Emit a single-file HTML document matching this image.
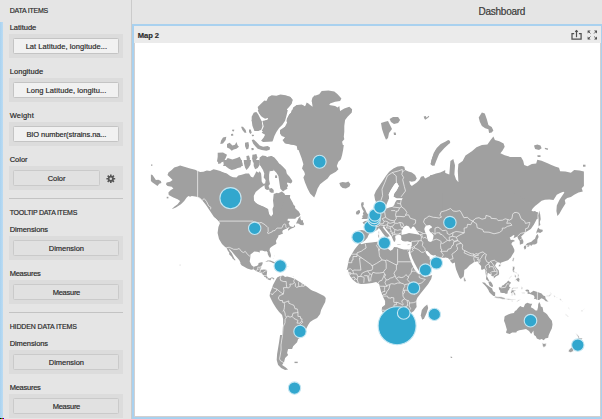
<!DOCTYPE html>
<html><head><meta charset="utf-8"><title>Dashboard</title>
<style>
html,body{margin:0;padding:0}
body{width:602px;height:419px;overflow:hidden;background:#e5e5e5;position:relative;font-family:"Liberation Sans",sans-serif;color:#2b2b2b}
.abs{position:absolute}
.lbl{position:absolute;white-space:nowrap;line-height:12px;height:12px;font-size:7.5px;color:#222;-webkit-text-stroke:0.18px #333}
.h{color:#262626;font-size:7px}
.box{position:absolute;left:9px;width:114px;height:24.2px;background:#dcdcdc}
.btn{position:absolute;left:4.4px;top:4px;height:16.2px;box-sizing:border-box;border:1px solid #c4c4c4;border-radius:1.5px;font-size:7.5px;line-height:16px;text-align:center;white-space:nowrap;color:#1e1e1e;-webkit-text-stroke:0.18px #333}
.f{background:#f1f1f1}
.e{background:#e1e1e1;border-color:#cacaca}
.sep{position:absolute;left:9px;width:114px;height:1px;background:#c3c3c3}
</style></head><body>
<div class="abs" style="left:0;top:22px;width:2.5px;height:397px;background:linear-gradient(90deg,#a9d2f0,#bcdcf3)"></div>
<div class="abs" style="left:0;top:418px;width:1.4px;height:1px;background:#000"></div><div class="abs" style="left:1.4px;top:418px;width:.6px;height:1px;background:#0b0"></div><div class="abs" style="left:2px;top:418px;width:.5px;height:1px;background:#e00"></div><div class="abs" style="left:2.5px;top:418px;width:.5px;height:1px;background:#00e"></div>
<div class="abs" style="left:131px;top:0;width:1px;height:419px;background:#cbcbcb"></div>

<div class="lbl h" style="left:9.7px;top:5.4px;letter-spacing:-0.228px">DATA ITEMS</div>
<div class="lbl l" style="left:9.7px;top:22.2px;letter-spacing:-0.013px">Latitude</div>
<div class="lbl l" style="left:9.7px;top:66.0px;letter-spacing:0.061px">Longitude</div>
<div class="lbl l" style="left:9.7px;top:109.9px;letter-spacing:0.180px">Weight</div>
<div class="lbl l" style="left:9.7px;top:154.2px;letter-spacing:-0.008px">Color</div>
<div class="lbl h" style="left:9.7px;top:206.5px;letter-spacing:-0.239px">TOOLTIP DATA ITEMS</div>
<div class="lbl l" style="left:9.7px;top:223.8px;letter-spacing:-0.089px">Dimensions</div>
<div class="lbl l" style="left:9.7px;top:267.9px;letter-spacing:-0.255px">Measures</div>
<div class="lbl h" style="left:9.7px;top:320.9px;letter-spacing:-0.139px">HIDDEN DATA ITEMS</div>
<div class="lbl l" style="left:9.7px;top:337.5px;letter-spacing:-0.089px">Dimensions</div>
<div class="lbl l" style="left:9.7px;top:381.8px;letter-spacing:-0.255px">Measures</div>
<div class="box" style="top:34.2px"><div class="btn f" style="width:106.0px;letter-spacing:0.055px">Lat Latitude, longitude...</div></div>
<div class="box" style="top:78.3px"><div class="btn f" style="width:106.0px;letter-spacing:0.081px">Long Latitude, longitu...</div></div>
<div class="box" style="top:122.3px"><div class="btn f" style="width:106.0px;letter-spacing:-0.071px">BIO number(strains.na...</div></div>
<div class="box" style="top:166.2px"><div class="btn e" style="width:86.4px;letter-spacing:-0.008px">Color</div></div>
<div class="box" style="top:236.0px"><div class="btn e" style="width:106.0px;letter-spacing:-0.026px">Dimension</div></div>
<div class="box" style="top:279.8px"><div class="btn e" style="width:106.0px;letter-spacing:-0.270px">Measure</div></div>
<div class="box" style="top:350.0px"><div class="btn e" style="width:106.0px;letter-spacing:-0.026px">Dimension</div></div>
<div class="box" style="top:393.8px"><div class="btn e" style="width:106.0px;letter-spacing:-0.270px">Measure</div></div>
<div class="sep" style="top:197.8px"></div><div class="sep" style="top:311.8px"></div>
<svg class="abs" style="left:106.1px;top:173.9px" width="9.6" height="9.6" viewBox="0 0 12 12"><g fill="#555"><circle cx="6" cy="6" r="3.7"/><g stroke="#555" stroke-width="2"><path d="M6 0.5V11.5M0.5 6H11.5M2.1 2.1L9.9 9.9M9.9 2.1L2.1 9.9"/></g></g><circle cx="6" cy="6" r="1.6" fill="#dcdcdc"/></svg>
<div class="lbl" style="left:478.6px;top:4.5px;font-size:10px;line-height:14px;height:14px;color:#3a3a3a;letter-spacing:-0.269px">Dashboard</div>
<div class="abs" style="left:132px;top:24px;width:470px;height:395px;background:#a9d1ef"></div>
<div class="abs" style="left:134px;top:26px;width:467px;height:17px;background:#ebebeb"></div>
<div class="lbl" style="left:137.8px;top:29.7px;font-size:7.6px;font-weight:bold;color:#2a2a2a;letter-spacing:-0.066px">Map 2</div>
<div class="abs" style="left:134px;top:43px;width:467px;height:374px;box-sizing:border-box;border:1px solid #d3d0d0;border-top:0;background:#fff;overflow:hidden" id="map">
<svg width="466" height="373" viewBox="0 0 466 373" style="display:block;margin-left:-1px"><g fill="#a0a0a0"><path d="M63.6 127.9L61.1 126.7L56.1 125.4L51.1 124.0L46.1 122.4L43.6 123.4L40.2 124.5L37.7 127.1L34.4 129.6L33.5 132.1L36.1 134.6L38.6 137.1L36.1 138.7L32.7 139.6L31.9 141.2L33.5 142.9L37.7 143.7L39.4 145.4L36.9 147.1L34.4 149.6L34.7 152.1L39.4 154.6L43.6 156.3L46.1 157.9L43.6 161.3L40.2 163.8L37.7 166.3L41.9 164.6L46.9 161.3L50.2 157.9L52.7 154.6L54.4 152.9L56.1 153.8L57.8 152.9L61.1 153.4L63.6 154.1L66.1 155.4L69.4 157.9L71.9 161.3L74.4 164.6L76.1 166.9L106.2 166.9L106.2 135.4L99.5 134.6L96.2 132.9L92.8 130.4L89.5 129.6L86.1 127.9L82.8 127.1L79.5 126.2L76.1 127.9L72.8 127.6L69.4 128.7L66.1 129.1Z"/><path d="M16.9 131.6L18.5 132.1L20.2 134.6L21.9 137.1L24.4 136.7L26.9 137.9L27.4 140.1L25.2 140.7L23.5 142.9L21.0 141.2L18.5 139.6L16.9 137.9Z"/><path d="M17.0 121.4L18.4 121.4L18.4 122.7L17.0 122.7Z"/><path d="M32.7 153.8L34.4 153.8L34.4 155.4L32.7 155.4Z"/><path d="M119.7 69.7L122.4 69.0L124.4 71.7L126.4 75.7L127.7 79.7L128.4 83.7L127.1 87.0L124.4 87.7L121.7 85.0L119.7 81.7L117.7 77.7L117.7 73.7Z"/><path d="M123.7 67.0L125.1 70.3L127.7 73.7L131.1 75.7L133.7 75.0L134.4 76.3L131.1 77.7L129.7 80.4L130.4 83.7L129.7 87.0L127.7 89.7L131.1 91.7L129.7 94.4L127.1 97.7L129.1 99.0L134.4 98.8L138.4 98.4L139.1 97.0L140.4 93.0L142.4 89.0L145.1 85.0L148.4 81.7L151.1 77.7L152.4 73.0L153.8 67.0Z"/><path d="M157.8 67.0L155.8 73.7L155.1 77.7L153.1 81.7L150.4 84.4L147.8 87.0L146.2 89.7L148.4 91.7L151.8 93.0L150.4 95.0L149.1 97.7L152.4 100.4L157.1 101.7L161.1 102.0L161.1 67.0Z"/><path d="M117.7 97.0L119.7 96.4L122.4 99.0L125.7 102.4L129.1 103.7L133.7 103.0L136.0 104.4L135.7 106.8L132.4 107.7L127.7 107.1L123.7 105.7L121.1 103.0L119.1 100.4Z"/><path d="M107.0 83.7L109.0 83.7L111.7 87.0L112.4 89.7L110.6 89.7L108.4 87.0Z"/><path d="M115.0 86.4L116.8 86.4L117.7 89.7L116.4 91.0L115.0 89.0Z"/><path d="M98.4 86.4L100.4 86.8L99.7 88.4L98.1 88.1Z"/><path d="M97.0 91.0L99.0 90.8L99.4 92.6L97.3 93.0Z"/><path d="M117.7 91.7L119.7 91.7L120.0 93.0L118.1 93.3Z"/><path d="M89.0 94.4L92.3 93.7L91.7 97.0L89.0 100.4L86.3 101.0L87.0 97.7Z"/><path d="M93.0 101.0L95.7 99.7L98.4 102.4L101.0 101.7L102.4 99.0L103.7 102.4L105.0 103.7L102.4 105.7L99.7 106.4L97.7 107.7L95.7 105.7L93.0 104.4Z"/><path d="M111.0 99.7L114.4 99.0L115.0 102.4L114.4 105.7L112.4 106.4L111.0 103.0Z"/><path d="M117.3 105.1L119.5 105.1L119.7 107.1L117.7 107.3Z"/><path d="M83.7 109.7L89.0 109.5L93.0 111.7L91.7 115.1L89.7 118.4L86.3 119.7L83.0 118.4L83.7 113.7Z"/><path d="M91.0 118.4L93.7 115.1L98.4 116.4L103.0 115.1L105.7 113.7L107.7 117.7L109.0 122.9L89.0 122.9Z"/><path d="M112.4 113.1L115.0 112.4L116.0 115.7L115.0 119.7L113.0 119.1Z"/><path d="M118.4 111.7L122.4 111.1L123.5 114.4L121.1 118.4L119.1 119.7L118.1 115.7Z"/><path d="M125.7 114.4L128.4 112.4L131.7 113.1L134.4 115.1L137.1 113.1L140.4 114.4L143.8 118.4L146.4 122.9L126.4 122.9L125.1 119.1Z"/><path d="M81.0 128.3L86.3 128.7L91.7 130.4L94.4 132.8L97.0 134.4L102.4 134.4L104.4 132.4L107.7 131.7L111.7 130.4L115.0 130.4L117.0 133.7L119.1 134.4L121.1 131.0L122.4 128.3L124.4 129.7L125.7 128.3L127.1 130.4L127.5 134.4L127.7 138.4L129.1 140.8L131.1 140.4L131.7 137.0L131.5 133.0L131.7 129.0L132.4 125.7L134.4 125.3L135.7 128.3L135.1 131.7L135.1 137.0L136.0 141.0L134.4 143.0L132.4 143.0L131.1 141.7L126.4 145.0L121.7 149.0L119.7 153.0L119.7 157.1L121.1 159.7L125.1 161.7L129.7 163.7L133.1 165.7L134.4 169.7L135.1 172.9L81.0 172.9Z"/><path d="M135.1 145.7L137.7 145.0L139.7 147.0L139.7 149.7L137.1 149.7L135.5 148.4Z"/><path d="M89.0 117.0L107.7 117.0L108.4 121.0L107.0 124.3L103.7 125.0L101.0 126.3L97.7 127.0L95.0 125.7L92.3 123.7L89.7 121.0Z"/><path d="M83.7 117.0L87.7 117.0L87.0 120.3L84.3 121.0Z"/><path d="M109.7 117.0L117.0 117.0L116.4 121.7L114.4 125.0L112.4 127.0L111.0 124.3L110.1 121.0Z"/><path d="M119.7 117.0L125.1 117.0L125.7 121.7L123.7 125.0L121.1 126.3L119.7 123.0Z"/><path d="M127.1 117.0L137.1 117.0L139.7 127.7L135.7 128.3L133.7 126.3L131.7 123.7L129.1 121.7L127.5 119.7Z"/><path d="M141.1 132.4L143.1 132.4L143.1 135.0L141.1 135.0Z"/><path d="M143.8 150.4L147.8 148.4L150.4 150.4L152.4 154.4L153.8 157.1L155.8 159.7L161.1 163.1L161.1 172.9L139.1 172.9L139.7 167.7L141.1 163.7L141.7 159.7L141.7 155.1Z"/><path d="M146.0 52.0L151.0 52.9L156.0 53.7L158.5 57.0L156.9 61.2L153.5 64.5L151.8 69.6L149.3 74.6L146.0 78.7Z"/><path d="M146.0 87.1L151.0 83.7L153.5 78.7L152.7 76.2L155.2 71.2L158.5 68.7L159.4 64.5L162.7 62.0L168.5 62.0L171.0 63.7L172.7 59.5L175.2 61.2L178.6 63.7L177.7 57.0L180.2 52.9L185.2 51.2L187.7 47.9L194.4 47.4L200.3 48.4L203.6 51.2L207.4 55.4L206.1 57.9L201.1 58.7L196.1 60.4L195.2 62.0L201.1 62.9L203.6 64.5L205.3 62.9L206.1 67.9L210.3 65.4L215.3 63.7L218.1 66.2L217.8 69.6L213.6 73.7L211.1 77.1L210.3 82.9L210.3 88.8L209.8 93.8L210.3 96.3L208.1 98.8L209.1 102.9L208.6 106.9L163.5 106.9L162.7 102.9L157.7 101.3L151.0 100.4L148.5 97.1L151.8 94.6L147.7 92.9L146.0 90.4Z"/><path d="M162.7 102.0L165.2 108.7L167.7 115.4L169.4 121.2L168.0 125.4L170.2 128.7L171.0 131.2L169.4 134.6L171.0 139.6L173.5 145.4L176.1 150.4L180.2 154.6L181.9 150.4L183.6 145.4L186.1 141.2L190.2 137.9L193.6 135.4L196.1 132.1L201.9 128.7L204.4 126.2L202.8 122.9L204.4 118.7L206.9 116.2L208.1 112.0L209.1 107.0L209.8 102.0Z"/><path d="M205.3 140.1L208.6 139.1L211.9 139.6L214.4 138.4L216.5 141.2L215.3 143.7L211.9 145.4L208.6 145.1L206.4 142.9Z"/><path d="M146.0 121.2L148.5 123.7L150.2 127.0L152.7 131.2L156.0 135.4L158.5 137.9L156.9 140.4L153.5 139.6L151.8 142.1L153.5 145.7L151.0 147.1L147.7 144.6L146.0 143.7Z"/><path d="M146.0 152.1L148.5 153.8L151.0 156.3L154.3 155.4L156.0 159.6L159.4 163.8L162.7 167.9L166.0 171.9L146.0 171.9Z"/><path d="M123.7 64.0L127.0 60.7L130.4 57.4L132.4 58.0L134.4 54.0L137.7 52.3L142.4 52.7L146.4 51.4L151.7 52.3L156.4 54.0L158.7 56.7L157.7 60.7L155.1 64.0L153.1 66.0L152.4 69.4L149.7 73.4L147.1 77.4L144.4 82.1L141.1 84.7L139.7 87.9L127.7 87.9L129.7 83.4L128.4 78.1L133.7 76.7L134.4 74.7L130.4 74.1L127.0 72.7L125.0 69.4Z"/><path d="M121.0 69.4L122.4 72.1L125.0 74.7L127.7 78.1L128.4 82.7L126.4 86.1L124.4 87.9L120.4 87.9L118.4 82.7L117.7 77.4L119.0 72.7Z"/><path d="M181.1 52.0L178.4 54.7L177.8 58.7L179.8 62.7L181.1 64.0Z"/><path d="M181.1 64.7L177.1 64.0L173.8 60.0L171.1 63.4L167.8 61.4L163.1 62.0L159.1 64.7L157.7 68.7L155.7 71.4L153.7 74.7L152.4 78.1L153.7 80.7L152.4 84.7L150.4 87.9L181.1 87.9Z"/><path d="M125.7 119.7L126.3 115.0L129.0 113.0L131.7 115.3L134.4 113.4L137.7 113.0L140.4 115.3L143.0 119.0L146.4 121.4L149.7 124.4L152.0 127.0L152.8 130.8L155.4 133.4L158.1 137.4L157.3 140.1L154.4 138.4L152.4 139.3L154.1 142.8L152.8 145.1L150.1 143.0L151.0 147.1L149.0 148.4L146.4 145.7L145.7 141.7L145.0 137.0L144.4 133.0L142.4 129.7L139.7 127.0L137.7 125.7L134.4 127.0L135.0 130.4L134.4 135.0L131.7 137.0L129.7 134.4L130.3 130.4L129.0 127.0L127.0 123.7Z"/><path d="M130.3 142.0L132.3 141.0L135.0 143.7L135.7 146.4L133.0 147.1L131.0 145.7Z"/><path d="M139.7 151.1L143.0 149.7L146.4 151.7L149.7 153.7L152.4 155.7L155.0 159.1L157.0 162.9L139.7 162.9L139.0 157.7Z"/><path d="M66.0 152.0L68.0 157.0L72.0 162.0L76.0 168.0L80.0 174.0L84.0 177.7L86.0 180.1L84.4 184.1L83.6 190.1L85.0 196.1L88.0 201.1L91.1 204.1L94.1 205.7L95.2 205.7L97.9 208.4L99.7 210.8L101.6 212.9L103.4 214.9L105.3 217.2L106.4 219.5L106.4 220.8L107.8 222.4L110.6 223.9L113.2 225.5L117.2 226.8L119.6 226.2L119.6 223.7L117.5 222.3L115.7 218.4L116.4 213.7L116.4 211.5L118.4 209.9L120.2 208.6L123.2 208.8L125.9 209.5L125.7 207.8L128.1 207.5L131.1 208.5L132.3 208.1L133.7 209.5L133.7 211.1L134.9 213.5L135.8 214.6L136.7 214.5L137.0 212.2L136.4 210.1L135.5 207.4L135.9 205.3L137.2 204.1L139.5 202.5L141.3 201.4L142.5 200.6L141.9 197.9L142.9 196.0L144.3 193.8L144.3 192.4L146.7 191.4L149.1 190.6L148.2 189.0L148.9 187.3L151.0 186.3L152.8 185.5L156.2 152.0L141.2 152.0L141.8 158.0L140.1 162.0L138.5 166.0L139.1 171.0L137.1 173.6L135.1 171.0L134.1 166.0L130.1 164.0L124.1 162.0L120.1 158.0L119.1 152.0Z"/><path d="M92.4 204.6L93.7 207.4L95.5 209.9L94.9 211.1L97.9 213.9L98.5 215.5L100.9 217.6L101.6 216.9L100.3 215.5L99.1 212.9L97.6 210.1L95.5 207.4L95.2 205.7Z"/><path d="M141.1 238.0L143.1 234.4L146.1 233.0L149.1 232.4L151.1 234.0L153.1 233.6L157.1 234.4L161.1 236.0L164.1 238.0L167.1 239.8L170.1 241.8L173.1 243.8L176.1 246.2L178.1 247.5L182.1 249.1L186.1 251.1L190.1 253.1L191.8 255.1L191.2 259.1L189.1 263.1L187.1 267.1L186.1 271.1L183.1 275.1L179.1 277.1L176.1 279.1L174.1 282.1L172.1 286.1L170.1 290.1L167.1 294.1L164.1 296.1L163.1 299.2L161.1 301.2L159.1 303.2L158.1 306.0L146.1 306.0L147.1 300.2L147.7 294.1L148.5 288.1L149.1 282.1L149.1 276.1L148.1 272.1L145.1 269.1L142.1 265.1L139.0 260.1L137.0 256.1L135.6 253.1L136.0 250.1L137.6 246.0L139.0 242.0Z"/><path d="M146.1 292.0L161.1 292.0L159.1 295.0L157.1 298.0L158.1 300.0L155.1 302.0L154.1 306.0L153.1 310.0L154.1 312.0L151.1 315.0L150.1 319.1L148.1 322.1L151.1 324.1L154.1 326.5L151.1 327.1L147.1 325.1L144.1 322.1L142.7 317.1L143.1 311.0L144.1 305.0L145.1 299.0Z"/><path d="M160.5 318.7L163.7 318.7L163.7 320.1L160.5 320.1Z"/><path d="M241.1 157.1L240.2 152.1L241.9 147.9L245.2 142.9L248.6 137.9L251.9 132.9L255.2 128.7L259.4 125.4L263.6 123.4L267.8 122.9L270.3 123.7L271.1 127.0L274.4 128.4L277.8 129.5L281.1 132.0L282.8 135.4L281.1 137.9L277.8 138.7L275.3 137.9L276.1 141.2L277.8 142.9L280.3 141.2L282.8 139.6L285.3 137.1L287.0 133.7L289.5 132.9L291.1 135.4L294.5 133.7L297.8 132.0L302.0 130.4L306.2 129.5L309.5 127.9L311.2 127.0L311.2 176.9L246.9 176.9L246.9 171.3L250.2 169.6L249.7 165.4L252.7 165.4L255.2 164.6L258.6 163.8L260.2 162.1L261.1 159.6L262.8 157.1L267.8 156.7L268.6 155.4L262.8 155.4L259.4 153.7L260.2 150.4L262.8 147.1L264.8 142.9L262.8 139.6L261.1 140.4L259.4 142.9L256.9 147.1L254.7 151.2L255.2 155.4L253.6 158.8L251.9 162.9L248.6 162.1L245.2 161.3L242.7 160.4Z"/><path d="M302.0 107.0L306.2 107.0L304.5 111.2L302.0 115.3L299.5 119.5L298.6 122.9L296.5 121.2L297.5 117.0L299.5 112.0Z"/><path d="M227.5 159.5L229.5 159.0L229.8 161.5L229.0 163.0L230.5 165.0L231.5 167.0L232.5 169.5L234.0 171.5L235.5 173.3L235.0 174.9L232.5 175.9L229.5 176.1L227.5 176.1L228.8 174.3L228.0 172.9L229.5 172.1L228.8 170.5L229.8 168.5L228.5 166.5L227.5 164.0L227.0 161.5Z"/><path d="M222.5 168.5L224.5 167.0L226.0 167.5L226.0 169.5L224.5 171.5L222.5 171.5L221.8 170.0Z"/><path d="M246.9 157.0L311.2 157.0L311.0 214.5L307.6 214.6L302.8 213.9L301.6 212.1L301.3 213.3L301.7 215.5L304.0 216.6L305.6 218.2L303.1 222.7L299.8 224.6L296.2 225.8L291.9 229.0L287.7 230.4L285.7 230.6L285.4 231.9L266.1 226.9L212.7 226.9L213.5 223.8L214.3 219.6L215.2 215.4L217.7 211.3L220.2 207.1L222.7 203.7L225.2 200.7L225.2 198.7L222.7 197.9L221.0 194.6L221.0 190.4L223.5 187.9L227.7 187.1L231.9 187.9L231.9 185.4L230.7 182.0L228.5 179.5L231.0 177.9L234.4 177.4L236.0 175.4L238.5 173.7L241.9 171.2L245.2 168.7L246.9 165.3L246.9 161.2Z"/><path d="M225.0 202.0L227.0 201.0L236.1 200.0L245.1 199.0L254.1 203.0L259.1 205.0L264.1 203.0L270.1 204.0L275.1 205.0L277.1 207.0L279.1 213.0L281.8 219.0L284.2 225.1L287.2 230.1L290.2 234.1L295.2 233.1L298.2 232.1L297.2 236.1L294.2 241.1L290.2 246.1L286.2 251.1L283.2 255.1L281.8 259.1L282.4 264.1L279.9 267.9L276.1 270.7L275.1 275.2L275.1 281.0L254.1 281.0L253.1 277.2L251.1 272.2L250.1 267.1L251.1 263.1L251.1 258.1L249.1 254.1L247.1 249.1L246.1 245.1L245.1 241.1L242.1 239.1L238.1 240.1L232.1 240.7L227.0 241.1L223.0 240.1L219.0 237.1L216.0 233.1L214.4 229.1L214.0 225.1L215.0 219.0L218.0 213.0L221.0 208.0Z"/><path d="M293.2 261.5L294.2 265.1L292.6 270.1L290.2 275.2L288.2 276.8L286.8 272.2L287.8 267.1L290.2 264.1Z"/><path d="M248.0 264.3L247.7 267.4L251.0 273.8L251.8 279.1L253.4 282.0L255.4 286.7L255.7 289.9L257.6 290.8L261.2 289.6L264.5 289.6L267.8 287.7L270.9 283.6L273.0 279.1L276.3 275.8L275.4 270.6L278.1 267.4L282.4 264.3L282.3 258.7L280.5 253.2L263.6 252.0Z"/><path d="M316.6 313.6L318.2 313.9L318.1 315.0L316.6 314.8Z"/><path d="M296.0 132.2L304.5 131.4L310.2 129.4L315.3 131.4L316.4 118.0L319.3 116.0L321.0 122.3L320.4 131.4L322.1 136.5L324.4 139.3L323.8 128.0L324.4 120.9L328.6 118.0L331.5 112.4L338.2 108.0L342.5 104.3L347.9 102.1L353.4 101.5L356.6 97.1L359.4 93.4L360.9 97.1L365.3 98.2L369.6 100.4L370.7 103.7L368.6 107.4L366.4 110.2L370.7 112.3L376.1 113.9L382.7 113.9L387.0 113.9L389.2 117.8L390.2 122.1L393.5 123.2L397.8 121.0L402.2 120.4L403.3 116.7L407.6 117.8L413.0 119.9L417.4 122.1L421.7 123.8L425.0 124.7L426.1 128.2L431.5 128.6L436.9 129.7L440.2 126.9L445.6 127.5L449.9 128.6L449.9 126.8L449.9 143.0L447.7 145.2L448.8 148.5L444.5 149.6L440.2 151.7L436.9 153.9L433.2 155.0L430.8 157.1L431.5 160.4L428.2 165.8L425.4 170.8L423.4 173.0L422.4 168.0L422.8 162.6L425.4 157.1L428.2 152.8L430.4 149.6L429.3 148.7L426.1 150.0L422.8 151.7L419.5 157.1L415.2 156.5L410.9 156.7L407.6 157.8L404.3 160.4L401.1 163.0L398.9 165.2L397.4 167.4L399.3 169.1L403.7 169.1L403.6 175.9L296.0 175.9Z"/><path d="M297.4 121.7L298.8 113.8L301.7 108.1L307.4 102.4L314.5 97.6L316.4 99.6L310.2 105.3L305.1 110.9L302.2 118.0L300.3 122.9Z"/><path d="M449.0 121.7L451.5 121.7L451.5 123.7L449.0 123.7Z"/><path d="M307.6 214.6L311.2 214.5L313.9 214.9L316.0 216.9L316.6 218.4L318.5 220.4L320.9 219.5L321.2 222.7L322.1 226.5L323.6 230.2L325.4 234.5L326.9 236.2L327.7 235.1L329.7 233.5L330.1 230.2L330.3 227.1L332.7 225.6L335.9 222.0L338.2 220.5L339.8 219.2L342.6 218.4L344.1 218.4L344.7 220.5L347.1 222.9L347.1 226.5L348.6 226.7L350.6 225.5L351.2 227.7L351.8 231.4L352.2 233.9L352.0 236.3L354.4 238.2L354.5 239.4L355.6 242.4L358.2 244.3L359.1 243.0L358.1 240.6L356.7 238.5L355.2 237.7L354.2 235.7L353.0 233.3L354.0 229.7L355.1 230.6L356.8 231.2L357.6 232.9L359.8 233.4L359.8 235.5L362.1 233.3L364.7 232.0L365.2 230.2L364.7 227.3L363.0 225.6L361.0 222.7L362.1 220.4L363.6 219.3L365.4 219.5L366.4 221.0L366.8 219.7L370.3 218.4L373.9 217.2L376.9 214.6L378.1 212.2L380.3 208.8L380.4 206.7L378.7 203.1L377.3 201.1L378.5 199.1L381.1 197.9L379.1 196.7L376.8 197.0L375.7 194.6L377.5 193.6L379.5 191.9L380.5 192.5L379.5 195.2L383.3 193.5L384.1 195.7L385.7 197.9L385.9 201.7L387.1 201.2L389.2 200.6L389.4 197.9L388.1 195.4L387.1 193.6L389.8 190.9L391.0 189.6L393.2 188.2L396.8 186.0L399.8 181.7L402.7 176.2L402.8 171.8L403.8 170.0L401.0 168.0L398.6 168.4L396.4 166.9L399.2 163.5L401.6 160.9L378.1 150.1L308.2 150.1L308.2 212.2Z"/><path d="M391.2 202.4L393.2 200.2L397.4 198.7L398.9 197.2L401.0 195.7L402.2 192.5L403.8 191.1L404.6 194.1L403.4 196.4L403.3 198.7L403.2 199.9L402.0 200.9L400.6 201.4L398.6 201.5L397.1 203.1L396.2 201.7L393.8 202.0L391.4 202.4Z"/><path d="M390.1 203.1L391.4 202.5L392.4 203.8L391.7 206.1L390.5 206.4L389.9 204.3Z"/><path d="M393.2 202.5L395.6 202.0L395.2 203.3L393.6 204.1Z"/><path d="M402.2 190.9L402.6 188.2L404.2 184.5L405.8 186.3L408.6 186.8L408.8 188.2L406.2 190.1L404.0 189.3L402.8 190.1Z"/><path d="M404.6 183.4L404.6 179.9L404.6 176.2L404.2 172.4L405.2 167.8L406.2 171.4L406.7 176.2L405.8 179.0L406.4 182.0L405.5 182.4Z"/><path d="M364.8 244.2L367.6 244.2L367.9 242.7L369.7 242.1L371.2 240.6L372.7 239.4L374.2 237.5L375.3 238.4L377.1 239.7L376.3 240.7L375.4 241.8L375.1 243.6L376.7 244.8L375.3 245.4L375.1 247.0L373.9 247.8L373.6 250.0L373.3 250.8L371.6 250.8L370.3 250.0L368.2 250.1L366.3 249.4L366.1 247.8L365.1 246.6L364.8 245.0Z"/><path d="M348.3 239.2L351.0 239.7L352.4 241.4L354.4 243.0L355.8 244.0L358.2 245.4L358.6 247.2L359.4 248.4L361.2 249.6L361.1 253.0L359.4 253.0L356.8 250.8L355.2 249.0L354.4 247.1L352.6 244.2L350.6 242.0L348.5 240.0Z"/><path d="M391.4 247.0L393.2 246.5L395.0 247.0L395.2 248.9L396.2 250.0L399.5 247.8L403.4 249.1L407.6 250.6L409.2 252.5L411.2 253.2L411.6 255.4L414.2 258.5L415.1 258.7L411.8 258.2L410.0 256.6L407.6 255.2L406.4 255.9L405.2 257.1L403.4 257.0L401.0 255.8L399.8 256.2L400.6 254.2L399.8 252.6L397.4 251.4L395.0 250.7L393.8 250.9L393.4 249.4L394.7 248.8L392.6 248.4L391.4 247.6Z"/><path d="M370.5 273.8L371.1 272.9L374.1 271.4L376.9 270.6L379.9 270.0L380.9 268.1L382.4 267.2L384.1 264.9L386.3 263.0L388.0 264.0L389.7 264.2L391.1 261.1L393.3 259.8L396.2 260.8L398.3 260.8L397.4 262.4L396.8 264.3L399.2 265.5L401.6 267.4L403.2 267.4L404.0 264.3L404.2 261.2L405.2 259.0L406.4 261.2L406.8 263.5L408.6 264.3L409.4 268.7L411.2 269.8L413.0 271.2L415.2 274.5L417.9 277.8L418.5 281.4L417.9 285.3L416.1 288.9L414.6 292.6L414.2 294.8L411.2 295.6L409.8 297.3L407.6 296.0L405.8 296.8L402.8 295.6L401.8 293.3L400.0 292.0L399.5 288.9L399.5 287.4L397.4 290.8L396.8 290.6L395.0 287.9L392.0 286.0L388.3 286.7L385.3 287.2L382.9 288.2L382.3 289.5L378.1 289.5L375.7 291.1L372.3 290.0L372.1 288.9L372.9 286.7L372.1 283.9L371.1 280.5L370.0 277.8L370.3 275.8Z"/><path d="M247.0 80.1L251.0 78.7L254.0 78.1L256.0 82.1L258.0 86.1L255.0 90.1L254.0 95.1L252.0 96.7L250.0 92.1L248.0 86.1Z"/><path d="M255.6 76.1L259.0 74.1L264.1 74.1L266.1 77.1L264.1 80.1L260.0 81.1L257.0 79.1Z"/><path d="M259.6 89.5L261.7 89.5L262.1 92.1L260.0 92.1Z"/><path d="M289.7 73.5L291.7 73.1L292.7 74.7L294.5 72.7L295.3 73.7L293.1 75.5L291.1 76.7L290.1 75.1Z"/><path d="M314.2 97.1L316.2 98.1L315.2 100.7L311.2 102.1L307.1 104.1L304.1 108.1L302.1 113.2L300.5 118.2L299.1 121.0L296.7 121.0L297.7 116.2L299.7 110.1L302.7 105.1L306.7 101.1L311.2 98.7Z"/><path d="M344.7 74.4L347.9 69.6L350.8 70.5L352.9 76.5L354.4 82.0L356.0 83.0L357.7 84.1L359.4 87.4L357.7 89.6L355.1 90.0L354.4 86.3L351.2 85.2L347.9 83.0L345.8 78.7Z"/><path d="M400.0 102.6L403.3 101.5L406.5 102.6L407.6 105.2L405.0 106.9L401.1 106.0Z"/><path d="M410.9 104.7L414.1 105.6L413.7 106.9L410.9 106.0Z"/><path d="M403.3 112.3L406.5 112.3L406.5 113.9L403.7 113.9Z"/><path d="M166.6 173.2L164.5 175.3L162.0 180.6L164.2 180.6L166.6 181.9L169.4 182.2L170.0 180.8L169.0 179.0L169.0 177.2L167.2 177.2L166.3 175.3Z"/><path d="M152.8 185.5L154.0 184.8L155.8 183.8L154.0 186.5L154.0 187.7L156.9 185.8L160.0 184.6L161.2 183.4L160.7 181.7L159.4 183.9L157.6 183.8L155.8 183.1L155.4 181.7L154.6 180.3L156.0 178.4L154.6 177.7L152.8 177.9L151.6 177.3L153.5 175.8L157.6 175.7L161.2 175.7L163.0 173.9L165.1 173.4L166.4 171.4L164.8 168.4L163.6 167.4L161.2 165.3L160.0 163.1L158.8 159.8L155.8 154.4L149.1 159.8L143.1 176.2L146.7 186.8Z"/><path d="M131.2 218.9L133.5 217.5L136.5 217.4L140.7 219.2L143.1 220.5L144.1 221.1L140.1 221.5L140.5 220.6L138.9 220.1L137.1 219.1L134.7 218.3L132.3 218.8Z"/><path d="M119.6 223.7L122.6 223.1L124.2 222.0L124.6 220.1L127.5 219.3L128.9 219.6L128.1 222.0L127.1 223.3L127.2 224.6L126.5 226.5L126.7 226.7L128.1 226.7L129.9 226.6L132.3 226.7L133.2 227.7L132.9 230.2L132.6 232.7L133.5 233.9L134.4 234.9L135.9 235.4L137.2 234.6L138.9 234.6L140.4 235.5L139.6 237.3L139.3 236.0L137.7 235.1L137.1 236.0L136.5 237.2L135.1 236.9L133.6 236.2L132.8 235.7L131.4 234.1L130.2 233.9L130.2 232.7L129.3 232.0L127.8 230.8L128.1 230.2L126.9 230.0L124.4 229.1L122.4 228.3L119.6 226.2Z"/></g><g fill="#a0a0a0" stroke="#fff" stroke-width="0.7"><path d="M379.3 214.6L380.4 214.9L379.8 217.5L379.1 218.8L378.2 217.5L378.5 215.9Z"/><path d="M364.5 222.3L365.4 221.3L367.3 221.5L366.7 223.1L365.4 223.7L364.5 223.2Z"/><path d="M329.7 234.3L330.3 234.3L331.3 235.7L332.1 237.5L331.5 238.5L330.1 238.8L329.7 236.9Z"/><path d="M378.7 223.3L380.8 223.4L380.8 225.8L380.0 227.7L381.1 229.0L382.9 229.6L382.9 230.7L381.1 229.6L379.3 229.3L378.8 228.3L378.1 227.1L378.5 225.8Z"/><path d="M380.5 237.5L382.3 235.6L384.6 234.3L385.9 236.3L385.6 238.2L384.6 239.1L382.9 238.2L382.3 236.9Z"/><path d="M383.4 230.8L384.7 231.1L385.0 232.7L384.4 233.9L383.6 233.5L383.9 232.0Z"/><path d="M380.5 231.8L382.0 232.0L382.1 233.9L381.5 234.7L380.9 234.1L380.5 233.3Z"/><path d="M374.8 235.7L377.5 232.3L377.3 233.5L375.2 236.0Z"/><path d="M360.3 254.2L361.2 253.1L364.2 253.8L367.0 253.7L369.3 254.3L371.5 255.3L371.4 256.4L368.5 256.2L364.8 255.4L361.8 254.9Z"/><path d="M372.1 255.8L374.5 255.8L376.9 255.9L379.3 256.0L381.7 255.9L381.7 256.6L378.1 256.8L374.5 256.9L372.1 256.6Z"/><path d="M382.3 258.5L384.1 256.9L386.5 256.2L385.9 257.1L383.5 258.4Z"/><path d="M376.9 257.4L379.1 257.5L378.7 258.4L377.1 258.0Z"/><path d="M377.5 252.6L377.5 250.2L376.7 249.4L377.3 247.4L377.9 245.4L379.1 244.4L381.7 244.8L384.1 244.0L383.5 245.5L381.7 245.4L379.3 245.4L378.3 247.1L379.9 247.1L382.1 247.1L381.5 247.9L379.9 248.3L380.9 250.0L381.7 251.3L381.1 252.4L379.9 251.7L379.3 249.4L378.5 249.6L378.6 252.6Z"/><path d="M387.1 243.6L388.0 244.2L388.6 245.6L387.7 247.0L387.3 245.4Z"/><path d="M387.7 249.6L391.1 249.6L390.8 250.5L388.0 250.2Z"/><path d="M412.4 252.8L414.9 252.6L416.7 251.1L417.0 252.0L415.5 253.2L413.0 253.5Z"/><path d="M407.9 299.8L410.0 300.6L412.2 300.1L412.1 302.4L411.2 303.8L409.4 304.5L408.6 302.7Z"/><path d="M441.6 290.2L443.5 291.8L445.0 293.3L445.3 295.0L448.0 295.0L448.5 295.6L446.8 297.6L446.7 298.7L444.7 301.2L444.0 300.7L444.6 298.7L442.9 297.6L444.0 295.6L444.0 294.1L442.0 291.1Z"/><path d="M441.6 299.5L443.5 301.4L441.7 304.3L439.9 305.7L439.2 308.6L436.5 309.6L434.1 308.6L434.7 306.9L436.5 305.2L439.0 303.2L440.2 301.4L441.0 299.9Z"/><path d="M45.5 221.7L46.7 221.5L46.7 222.4L45.8 222.7Z"/><path d="M139.1 223.4L141.6 223.8L140.8 224.2L139.3 223.8Z"/><path d="M152.5 223.3L154.3 223.4L154.2 223.9L152.5 223.9Z"/><path d="M138.9 215.5L139.8 214.9L139.9 215.9Z"/><path d="M139.8 212.7L140.7 212.7L140.5 213.5Z"/><path d="M158.9 232.9L160.0 232.9L160.0 233.8L158.9 233.8Z"/><path d="M431.1 270.7L432.9 271.9L434.7 273.6L434.1 273.7L431.7 271.9Z"/><path d="M447.1 267.3L448.6 267.3L448.6 268.3L447.3 268.2Z"/><path d="M449.0 266.2L450.4 265.8L449.8 266.5Z"/><path d="M434.3 264.3L435.0 264.5L435.1 265.5L434.5 265.2Z"/><path d="M435.0 265.8L435.7 266.0L435.3 266.3Z"/><path d="M425.8 255.7L427.3 256.0L427.0 257.6L425.9 257.1Z"/><path d="M422.1 254.1L423.3 254.8L422.7 254.9Z"/><path d="M427.4 256.3L428.1 257.7L427.5 257.6Z"/><path d="M428.1 258.4L429.1 258.7L428.3 259.0Z"/><path d="M415.1 249.3L416.9 250.1L418.0 251.5L417.5 251.2L416.1 249.9Z"/><path d="M419.9 252.3L421.4 253.8L420.8 254.2L419.8 253.1Z"/><path d="M143.8 223.2L145.5 221.5L147.1 221.7L149.3 221.9L151.1 223.2L149.1 223.6L147.3 224.3L145.8 223.7L144.3 223.7Z"/></g><g fill="#fff"><path d="M226.5 200.6L231.0 197.6L233.5 194.5L234.5 192.0L236.1 189.8L240.1 188.5L243.1 187.0L244.9 185.0L246.6 187.0L248.6 190.0L250.6 192.5L252.1 194.5L252.6 197.1L253.6 196.0L254.1 193.5L255.6 193.8L255.1 192.0L253.1 190.0L251.1 187.5L249.6 185.5L248.6 184.0L250.1 183.5L251.1 185.0L253.1 187.5L255.1 190.0L257.1 192.5L258.1 194.5L259.1 197.1L260.1 199.1L261.1 198.3L261.6 196.0L261.1 194.0L261.6 192.5L263.6 192.0L265.6 192.0L267.1 192.5L267.3 194.5L267.1 196.5L268.6 197.9L271.1 198.6L273.6 198.3L276.1 198.9L277.9 199.3L277.9 199.6L277.6 202.1L276.9 205.1L276.1 206.6L273.1 206.6L269.7 206.4L266.1 205.6L263.1 204.3L260.1 203.9L258.6 206.6L256.5 207.7L253.1 205.1L249.5 203.6L247.1 203.3L245.8 202.1L246.3 200.1L245.4 198.6L241.1 198.9L237.2 199.4L232.0 200.1L227.0 201.3Z"/><path d="M262.8 139.6L264.8 142.9L262.8 147.1L260.2 150.4L259.4 153.7L262.8 155.4L268.6 155.4L267.8 156.7L262.8 157.1L261.1 159.6L260.2 162.1L258.6 163.8L255.2 164.6L252.7 165.4L250.7 165.1L251.9 162.9L253.6 158.8L255.2 155.4L254.7 151.2L256.9 147.1L259.4 142.9L261.1 140.4Z"/><path d="M78.9 174.0L81.0 175.1L83.2 177.1L85.2 179.4L84.0 180.1L81.7 178.3L79.4 176.1Z"/><path d="M267.5 192.0L267.5 189.0L268.0 187.0L269.0 185.5L269.5 184.0L272.5 182.5L275.0 183.5L276.1 185.5L277.3 185.8L278.1 184.0L279.6 183.5L281.1 185.0L283.1 188.5L285.1 190.5L284.6 191.5L281.1 191.0L278.1 190.5L275.0 190.0L272.0 191.0L269.5 191.5Z"/><path d="M292.6 182.5L295.6 182.0L297.6 183.2L297.9 184.8L296.1 185.5L295.1 187.0L296.1 189.0L298.1 190.5L299.6 192.5L299.1 195.5L298.1 198.3L296.1 199.1L294.1 197.9L293.1 195.0L292.6 192.0L291.1 189.0L290.3 186.0L291.1 183.8Z"/><path d="M272.9 207.8L273.9 207.4L275.3 214.0L277.9 221.0L280.7 226.7L284.2 230.5L285.8 231.5L286.2 230.1L283.4 225.5L280.7 220.4L278.3 215.4L276.3 209.8L275.9 207.8L275.1 209.0Z"/><path d="M301.3 213.3L299.2 215.8L295.9 216.2L295.3 213.5L294.0 213.1L292.2 210.4L291.3 208.4L293.1 207.8L294.7 209.2L296.8 211.4L299.2 212.6L301.6 212.1Z"/></g><g fill="#a0a0a0" stroke="#fff" stroke-width="0.5"><path d="M249.6 196.5L252.6 196.0L252.1 197.9L250.1 197.6Z"/><path d="M243.9 191.5L245.1 191.2L245.3 194.5L244.1 194.8Z"/><path d="M244.3 188.5L245.1 188.2L245.3 190.5L244.5 190.8Z"/><path d="M263.1 201.1L266.6 200.9L266.7 201.7L263.3 201.9Z"/><path d="M273.3 201.6L275.1 200.9L276.3 201.1L275.1 202.1L273.6 202.3Z"/></g><path fill="none" stroke="#f4f4f4" stroke-width="0.72" stroke-linejoin="round" d="M63.6 127.6L63.6 154.4L66.0 155.1L67.8 157.7L70.2 155.6L72.6 158.6L74.7 162.9L76.8 164.2L76.6 166.3M84.9 178.1L118.8 178.1L119.5 178.6L122.6 179.4L125.7 179.9L127.1 179.4L131.3 181.9L131.7 182.6L132.9 183.4L134.1 184.6L134.2 188.5L133.4 190.0L134.1 190.6L138.3 188.8L138.3 188.0L141.0 187.5L141.6 186.5L143.1 185.1L147.3 185.1L148.2 184.5L149.1 182.2L150.1 181.0L151.2 181.1L151.8 181.7L151.8 183.9L152.8 185.5M92.4 204.6L95.3 204.3L99.7 206.3L103.1 206.3L105.2 205.5L107.6 208.6L109.4 209.5L111.3 208.4L113.6 211.5L116.4 213.7M122.4 228.3L122.6 227.6L123.0 226.5L124.4 226.3L123.4 225.0L123.8 224.9L123.8 224.2L126.1 224.2L127.1 223.3M126.1 224.2L126.0 226.6L127.1 226.8M126.7 226.8L125.9 228.5L124.9 229.3M125.9 228.5L127.7 229.7M128.3 230.2L129.9 229.0L131.3 228.0L133.2 227.7M130.2 232.5L132.6 232.8M133.6 236.2L134.0 234.4M140.4 235.5L139.6 237.3M147.1 221.8L147.0 223.9M147.6 231.7L146.1 235.1L146.7 237.5L149.8 238.6L152.2 238.5L152.4 241.9L152.8 244.6M152.8 244.6L149.4 244.7L149.9 247.6L149.3 251.1M149.3 251.1L146.1 248.9L142.8 246.1M142.8 246.1L140.1 245.3L138.5 244.3M142.8 246.1L142.5 247.8L139.5 250.0L138.3 252.0L136.7 250.1M149.3 251.1L145.5 252.6L144.3 255.1L145.8 257.5L148.5 257.5L148.4 259.3L149.8 259.3M149.8 259.3L150.6 261.4L150.4 264.7L149.8 267.4L148.7 268.4M149.8 259.3L151.0 259.3L154.8 257.9L154.8 260.2L157.6 261.4L160.0 262.4L161.0 265.8L163.2 265.9L163.6 267.4L164.0 269.3M164.0 269.3L162.4 269.7L159.0 270.2L158.1 273.4M158.1 273.4L156.0 274.2L153.7 272.9L152.5 274.2M149.8 267.4L151.0 270.0L151.3 272.5L152.5 274.2M152.5 274.2L151.1 276.5L151.0 279.8L149.1 283.9L148.8 288.2L148.5 292.6L147.7 297.1L147.0 301.9L147.1 306.9L146.1 313.0L145.5 315.8L146.4 317.7L151.1 320.4M164.0 269.3L163.9 273.3L166.4 273.6L166.7 275.8L168.1 275.9L167.7 277.9M158.1 273.4L160.0 275.5L164.1 277.5L162.9 280.1L166.0 280.2L167.7 277.9M167.7 277.9L168.8 279.1L166.3 281.6L164.1 284.2M164.1 284.2L166.5 285.0L169.0 289.2M164.1 284.2L163.4 287.4L163.1 289.6M152.8 244.6L154.6 245.0L156.4 243.0L155.8 241.1L158.2 241.2L160.4 239.7M160.4 239.7L159.6 237.9L161.2 235.7M160.4 239.7L161.4 240.6L161.3 243.2L162.5 244.4L164.8 243.6L167.8 243.2L170.2 243.2L171.2 241.2M164.8 243.6L164.5 239.4L164.7 238.8M167.8 243.2L168.4 239.1M231.3 200.8L232.1 205.0L229.3 206.7L227.5 208.1L223.0 209.9L223.0 211.8M217.6 211.2L223.0 211.2M223.0 211.8L223.0 213.5L219.0 213.5L219.0 217.0L217.8 217.5L217.8 219.7L213.0 219.7M223.0 211.8L227.7 214.9L234.9 220.0L237.4 221.7L237.5 222.7L238.6 222.5L242.5 220.4L248.0 216.9M243.9 198.1L243.4 201.4L242.5 202.7L244.3 205.1L244.9 207.8L245.4 212.2L245.3 212.9L248.0 216.9M244.9 207.8L245.9 205.7L247.4 203.7M263.6 205.8L263.6 218.8L263.6 221.4L262.4 221.4L262.4 222.0L252.8 217.0L251.6 217.5L248.0 216.9M263.6 218.8L278.0 218.8M227.7 214.9L225.5 214.9L226.9 227.1L222.3 227.1L219.6 227.0L218.8 228.0L216.6 225.7L213.6 226.5M238.6 222.5L238.6 225.8L237.7 227.2L234.7 227.7L233.7 227.8L231.1 228.7L228.3 230.0L226.9 232.2L226.9 233.4L223.9 233.6L222.7 230.9L219.8 230.9L218.8 228.0M251.6 217.5L252.2 220.8L252.2 225.5L249.8 228.3L249.8 229.3L245.6 230.0L241.9 230.1L238.9 229.3L237.8 231.8L236.4 231.1L234.6 229.6L233.7 227.8M249.8 229.3L250.6 230.8L249.5 233.9L247.7 237.5L245.8 237.8L243.9 240.2M237.8 231.8L236.8 235.1L236.8 238.3M262.4 222.0L262.4 226.8L260.6 229.0L260.0 230.7L261.1 232.7L258.8 234.5L256.4 235.1L254.0 236.8L252.2 236.9L250.4 233.9L251.6 232.0L250.6 230.8M261.1 232.7L262.3 235.5L264.8 233.9L267.2 234.6L269.6 234.1L272.1 231.6L273.5 233.5L274.5 234.5L274.8 232.7L277.0 230.6L277.5 228.6L278.1 225.2L280.0 223.9M277.5 228.6L279.3 228.2L281.7 228.3L284.6 230.8M285.2 232.7L285.3 234.5L287.7 235.6L291.3 236.3L287.7 240.0L284.1 240.9L282.9 241.3L281.1 241.8L279.3 241.7L277.8 240.7L276.8 240.5L274.5 240.9L270.9 241.5L270.6 241.8M282.9 241.3L282.9 246.0L283.6 248.0M274.5 240.9L275.1 244.6L274.5 247.2L278.9 249.7L280.7 251.7M274.5 234.5L273.3 236.6L275.7 239.4L276.8 240.5M262.3 235.5L266.5 240.0L269.0 240.6L270.6 241.8M266.5 240.0L263.6 240.0L260.6 241.1L257.6 240.7L255.9 241.2L255.9 241.8L253.4 242.1L253.0 243.3L251.6 241.2L251.0 239.4L252.2 236.9M245.3 243.2L249.5 243.3L253.0 243.3M249.5 243.3L250.9 244.4L250.4 246.6L251.0 248.4L248.6 248.8L247.0 250.7M255.9 241.8L254.9 246.0L253.0 248.4L251.9 251.2L249.2 251.7L248.2 253.0M248.2 253.1L249.8 253.1L253.5 253.1L254.0 254.8L256.9 255.2L257.0 254.5L259.8 254.8L259.8 259.3L260.3 259.6L262.4 259.3L262.4 260.9L262.4 261.8L260.0 261.8L260.0 265.8L261.7 267.5M247.7 267.2L250.4 267.3L255.8 267.3L261.7 267.5L264.0 267.8M262.4 259.3L264.0 259.6L266.0 260.6L267.7 261.2L268.4 262.3L269.4 260.8L267.8 259.3L268.0 257.5L270.6 255.9L269.0 253.2L268.9 251.3L268.7 249.0L269.2 247.7L269.3 246.0L270.9 243.2L270.6 241.8M269.2 247.4L270.3 247.2L274.5 247.2M270.3 247.2L270.6 248.9L270.1 250.2L268.9 251.3M275.6 260.0L279.3 259.7L282.2 258.7M270.6 255.9L273.1 257.4L274.5 257.5L275.6 260.0L275.1 263.0L276.6 265.5L275.9 266.8M273.1 257.4L273.6 260.6L273.3 263.0L269.9 264.3L270.1 265.0L268.3 265.5L266.0 267.9L264.0 267.8M270.1 265.0L273.1 266.4L273.0 270.0L272.5 272.3L271.2 273.7L268.9 273.4L266.9 271.2L265.1 269.3L264.0 267.8M264.0 267.8L261.7 268.1L258.8 268.4L258.8 273.2L257.6 273.2L257.6 276.9L257.6 281.7L254.6 282.1L253.4 282.0M257.6 276.9L258.6 279.5L261.2 277.5L264.2 278.1L265.9 275.4L268.9 273.4M271.2 273.7L272.1 276.5L272.1 279.5L273.1 279.7M230.2 234.5L229.8 239.8M230.1 232.7L233.5 232.7L234.9 238.6M235.4 238.5L234.6 232.7L236.4 231.1M226.9 233.4L230.1 234.3M224.5 240.7L223.3 236.8L223.9 233.6M223.3 236.8L221.1 235.7L219.6 237.7M221.1 235.7L220.2 233.9L217.5 235.1M219.8 230.9L217.0 230.6L215.4 232.7M213.4 230.9L217.0 230.6M213.3 229.5L216.9 229.6M222.9 190.3L225.7 190.3L225.2 193.3L224.6 197.6M231.3 187.8L237.4 189.5M236.5 174.1L238.6 176.2L240.5 177.2L243.4 178.1L242.7 180.6L240.7 183.1L241.9 183.6L241.9 186.5L242.5 187.2M242.2 169.8L241.9 172.0L240.7 174.7L237.6 173.6M240.7 174.7L240.5 177.2M243.9 166.5L245.4 166.7M250.6 168.6L251.2 172.4L251.6 174.3L248.2 175.7L250.1 178.4L249.2 180.8L245.1 180.8L242.7 180.6M241.9 183.6L244.3 183.4L246.2 181.9L250.0 182.6L252.9 181.9M251.6 174.3L253.4 175.7L256.2 177.2L260.6 177.9L262.4 175.3L261.9 173.4L261.5 171.8L262.3 168.6L261.8 168.4L261.0 167.6L257.2 167.6M250.1 178.4L251.6 178.1L253.9 178.8L254.0 179.7L256.2 180.3L260.1 179.2L260.6 177.9M254.0 179.7L253.4 181.7L252.9 181.9L253.5 182.6L256.2 183.6L258.0 183.3L258.8 183.1L261.1 180.1L260.1 179.2M261.1 180.1L263.5 180.4L265.6 179.4L267.5 184.3L269.2 184.6M265.6 179.4L268.7 180.1L269.6 182.7L267.5 184.3M258.0 183.3L259.3 185.5L260.9 186.5L263.6 187.3L266.0 186.7L268.0 187.3M260.9 186.5L260.5 189.6L261.2 191.3L264.8 191.1L265.3 190.6L267.2 190.1M265.3 190.6L264.8 192.2M261.2 191.3L258.8 191.9L257.6 193.8M250.0 182.6L249.9 184.3M253.5 182.6L252.4 184.8L256.4 185.3L256.9 187.7L255.8 189.3M256.4 185.3L256.9 184.8L256.2 183.6M256.9 187.7L258.1 188.8L258.3 190.3L258.8 191.9M256.9 190.1L258.3 190.3L260.5 189.6M246.9 157.5L248.6 152.6L248.0 146.2L251.0 139.1L253.4 132.9L258.2 129.6L262.2 132.9L262.4 139.7M258.2 129.6L264.5 127.9L268.3 126.5L268.4 129.3L270.6 126.9M268.4 129.3L267.8 131.3L269.6 134.5L268.7 136.7L270.3 143.4L271.5 148.0L267.0 153.9M267.2 156.5L266.5 160.9L267.5 163.8L270.9 166.3L272.9 169.4L271.5 172.0L271.8 172.2L274.5 171.8L276.3 175.3L279.3 176.2L281.7 177.0L281.5 180.3L279.5 181.5M262.8 160.0L266.5 160.9M258.8 164.0L265.6 164.8L267.5 163.8M265.6 164.8L264.2 168.0L261.8 168.4M261.9 173.4L266.0 173.4L270.3 173.8L271.8 172.2M281.7 187.8L285.9 188.8L289.5 190.5L292.1 190.5M283.5 190.9L285.9 191.6L287.7 191.3L289.5 190.5M285.9 191.6L287.5 193.8L287.1 196.7L287.5 197.6M276.9 199.4L277.7 198.3L279.9 198.3L284.6 197.8L287.5 197.6L288.9 199.7L288.3 202.4L289.2 203.8L291.1 205.5L291.0 206.8L291.9 208.1M287.7 191.3L288.3 194.1L289.5 195.0L291.3 194.1L292.4 195.8M298.4 197.5L302.2 196.1L305.2 197.2L307.2 198.6L306.5 202.4L306.9 206.0L308.0 206.7L306.9 208.4L309.4 211.9L307.7 214.6M284.6 197.8L283.1 201.2L280.3 203.3L280.7 205.0L278.1 206.0L279.3 207.4L278.7 208.1L276.9 209.2L275.7 208.9M280.7 205.0L284.1 206.5L287.4 209.2L289.5 209.3L290.7 208.1M285.1 226.0L286.5 224.7L290.1 225.2L296.2 222.7L299.8 221.4L300.6 218.8L300.0 217.9L296.9 217.5L295.7 215.9M296.2 222.7L297.5 225.7M300.0 217.9L301.0 216.1L301.5 215.0M274.7 206.3L275.6 208.8M276.5 204.3L277.8 204.8L280.3 203.3M276.4 203.4L276.3 206.0L275.7 208.8M276.9 201.5L277.4 201.7L277.6 202.1L276.8 203.4M292.5 183.1L290.1 179.9L289.5 179.0L290.7 175.7L292.2 175.1L295.0 173.0L299.2 174.3L302.2 174.5L305.2 175.1L307.6 173.9L305.8 172.4L307.2 168.8L311.8 167.6L316.6 165.5L319.1 168.0L322.1 168.4L326.0 167.6L327.4 169.8L329.9 174.7L333.5 174.3L336.2 177.0L338.7 177.9M338.7 177.9L341.9 175.3L345.0 174.7L348.0 176.2L351.6 175.3L352.0 172.4L356.7 173.8L357.0 175.3L362.4 175.8L364.2 177.5L368.5 177.2L371.2 175.8L374.1 176.6M374.1 176.6L375.4 177.2L377.9 175.7L378.7 171.2L379.9 169.8L382.3 169.4L385.0 170.4L387.1 175.8L390.8 178.3L391.4 180.4L395.8 179.4L395.6 180.8L393.8 185.1L391.6 185.7L391.4 188.5L390.9 189.5L387.7 190.1L386.3 190.6L383.3 193.5M386.2 196.7L388.2 195.5M339.3 177.7L339.5 179.0L342.6 180.8L343.2 184.8L348.6 186.5L349.7 189.0L355.0 189.2L360.0 190.8L365.4 189.5L368.3 187.3L368.3 185.1L370.9 185.1L373.3 183.4L377.9 182.2L376.3 180.1L372.7 180.3L374.1 176.6M338.7 177.9L336.8 181.7L333.5 181.3L332.9 184.6L330.1 185.1L330.3 189.8L326.0 191.9L322.3 194.1L323.8 197.6L327.2 200.2L328.7 202.0L328.3 204.6L328.5 206.4L331.1 207.8M331.1 207.8L330.0 209.7L333.9 211.6L336.9 212.7L339.7 213.0L339.7 211.0M331.1 207.8L334.7 209.6L337.1 210.8L339.7 211.0L340.6 211.8L341.7 210.6L343.9 211.1L346.8 209.5L349.2 208.9L350.7 210.6M340.6 211.8L341.7 212.6L344.4 212.3L343.9 211.1M339.7 213.0L340.5 213.1L341.7 213.5L341.7 214.5L344.8 214.9L343.4 216.2L343.4 216.7L344.7 216.6L345.1 219.7L344.7 220.5M340.5 213.1L339.7 215.5L340.5 218.6L340.7 219.3M350.7 210.6L348.2 212.7L347.6 214.6L345.9 216.2L346.0 218.8L345.1 219.7M350.7 210.6L352.4 211.4L351.2 215.1L352.8 218.8L355.4 219.9L356.5 218.3L360.5 217.1L362.0 218.8L363.6 219.3M355.4 219.9L354.1 221.0L351.3 223.2L352.3 226.5L351.8 227.5L353.0 230.7L352.6 233.4M356.5 218.3L358.8 220.9L360.0 223.1L363.2 228.1L363.0 231.1L361.0 231.9L359.3 233.4M354.1 221.0L355.6 222.0L355.2 224.6L356.4 223.7L358.8 223.6L359.8 225.8L360.7 228.5L363.2 228.1M360.7 228.5L357.6 228.7L356.8 229.6L357.5 231.8M354.1 238.3L356.5 238.5M365.6 243.6L367.3 244.8L371.5 244.3L373.0 240.8L375.2 240.9M403.4 249.1L403.4 257.0M384.1 257.1L383.3 257.5M315.7 216.6L319.1 215.7L317.9 211.2L321.9 208.2L323.3 206.7L323.5 204.6L322.7 203.5L322.7 201.4L327.2 200.2M306.9 208.4L313.4 208.2L313.9 206.4L317.0 205.4L317.9 202.8L319.2 202.2L319.8 199.0L322.1 198.1L323.8 197.6M307.2 200.0L308.8 200.5L311.2 198.9L313.6 197.3L315.4 197.9L317.2 197.0L318.5 196.1L319.7 198.3L323.8 197.6M296.8 190.5L298.6 189.6L301.0 191.3L301.0 185.1L304.0 184.1L307.0 186.2L308.2 187.7L311.7 187.3L313.2 188.5L313.0 190.3L315.4 191.7L319.1 189.6L322.1 188.5L323.9 188.7L330.3 189.8M301.0 191.3L302.8 189.8L305.8 189.8L305.9 191.1L308.1 191.6L311.2 195.0L313.6 197.3M315.4 197.9L315.2 194.1L318.5 193.3L322.3 194.1M319.1 189.6L318.5 193.3"/><g fill="#32a7ce" stroke="#c4e6f2" stroke-width="1.1"><circle cx="396.5" cy="277.7" r="6.3"/><circle cx="443.8" cy="302.1" r="6.2"/><circle cx="315.9" cy="179.6" r="6.2"/><circle cx="263.1" cy="282.7" r="19"/><circle cx="269.7" cy="270.0" r="6.3"/><circle cx="250.4" cy="200.0" r="6.1"/><circle cx="302.4" cy="220.0" r="6.1"/><circle cx="291.4" cy="227.0" r="6.1"/><circle cx="279.6" cy="245.0" r="6.1"/><circle cx="300.4" cy="271.4" r="6.1"/><circle cx="236.0" cy="184.0" r="6.1"/><circle cx="240.2" cy="176.9" r="6.1"/><circle cx="240.2" cy="174.5" r="6.1"/><circle cx="240.9" cy="172.0" r="6.1"/><circle cx="245.9" cy="164.2" r="6.1"/><circle cx="224.0" cy="194.2" r="6.1"/><circle cx="166.0" cy="288.4" r="6.2"/><circle cx="160.5" cy="345.1" r="6.2"/><circle cx="96.5" cy="155.2" r="10.6"/><circle cx="120.7" cy="185.3" r="6.2"/><circle cx="146.2" cy="223.0" r="6.2"/><circle cx="185.6" cy="118.7" r="6.5"/></g></svg>
</div>
<svg class="abs" style="left:570px;top:29px" width="30" height="12" viewBox="0 0 30 12" fill="none" stroke="#505050" stroke-width="1.25">
<path d="M4.2 4.7H2V10H11.1V4.7H8.9"/><path d="M6.5 8.2V1.4" stroke-width="1.2"/><path d="M5.2 2.9L6.5 1.5L7.8 2.9" stroke-width="1.1"/>
<g stroke="none" fill="#505050"><path d="M17.6 1.6H20.6L17.6 4.6Z"/><path d="M27 1.6H24L27 4.6Z"/><path d="M17.6 10.4H20.6L17.6 7.4Z"/><path d="M27 10.4H24L27 7.4Z"/></g>
<g stroke-width="0.9"><path d="M18.6 2.6L20.5 4.5M26 2.6L24.1 4.5M18.6 9.4L20.5 7.5M26 9.4L24.1 7.5"/></g>
</svg>
</body></html>
